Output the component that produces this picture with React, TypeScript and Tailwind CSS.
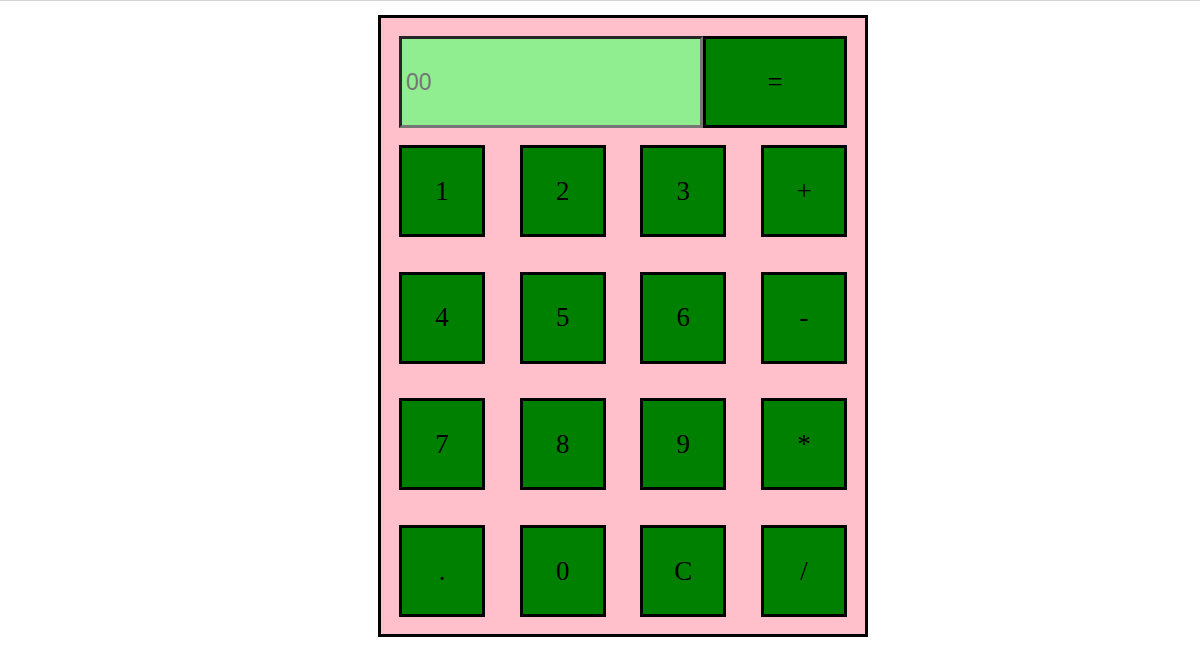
import React from "react";

const keys = ["1", "2", "3", "+", "4", "5", "6", "-", "7", "8", "9", "*", ".", "0", "C", "/"];

export default function App() {
  return (
    <div className="w-[1200px] h-[655px] bg-white overflow-hidden">
      <div className="h-px bg-[#d3d3d3]" />
      <div className="pl-[378px] pt-[14px]">
        <div className="w-[490px] h-[622px] border-[3px] border-black bg-[#ffc0cb] pl-[18px] pr-[18px] pt-[18px]">
          <div className="flex h-[92px]">
            <input
              readOnly
              placeholder="00"
              className="w-[304px] h-[92px] bg-[#90ee90] border-[3px] border-t-[#262626] border-l-[#262626] border-b-[#767676] border-r-[#767676] px-[4px] text-[23px] outline-none placeholder:text-[#757575]"
              style={{ fontFamily: '"Liberation Sans", Arial, sans-serif' }}
            />
            <button
              className="w-[144px] h-[92px] bg-[#008000] border-[3px] border-black text-[27px] text-black"
              style={{ fontFamily: '"Liberation Serif", "Times New Roman", serif' }}
            >
              =
            </button>
          </div>
          <div className="mt-[17px] grid grid-cols-4 gap-x-[34.67px] gap-y-[34.67px]">
            {keys.map((k) => (
              <button
                key={k}
                className="h-[92px] bg-[#008000] border-[3px] border-black text-[27px] text-black flex items-center justify-center"
                style={{ fontFamily: '"Liberation Serif", "Times New Roman", serif' }}
              >
                {k}
              </button>
            ))}
          </div>
        </div>
      </div>
    </div>
  );
}
